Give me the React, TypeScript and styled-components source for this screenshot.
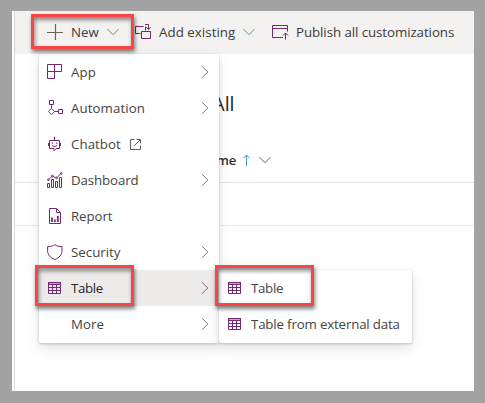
import React from "react";
import styled, { createGlobalStyle } from "styled-components";

const GlobalStyle = createGlobalStyle`
  * { box-sizing: border-box; }
  body {
    margin: 0;
    background: #a3a3a3;
    font-family: "Open Sans", "Noto Sans", sans-serif;
    font-size: 13.3px;
    color: #3b3a39;
    overflow: hidden;
  }
`;

const Frame = styled.main`
  position: relative;
  width: 485px;
  height: 403px;
  padding: 11px 11px 12px 12px;
  background: #a3a3a3;
`;

const Window = styled.div`
  display: flex;
  height: 380px;
  background: #fff;
`;

const Rail = styled.div`
  width: 3px;
  border-right: 1px solid #d8d8d8;
`;

const Page = styled.div`
  flex: 1;
  min-width: 0;
`;

const Toolbar = styled.header`
  display: flex;
  align-items: center;
  height: 43px;
  padding: 0 0 2px 32px;
  background: #f3f2f1;
`;

const Command = styled.div<{ $width: number; $gap?: number }>`
  display: flex;
  align-items: center;
  gap: ${(p) => p.$gap ?? 8}px;
  width: ${(p) => p.$width}px;
  flex: none;
  white-space: nowrap;
`;

const Label = styled.span<{ $spacing?: number }>`
  line-height: 20px;
  white-space: nowrap;
  letter-spacing: ${(p) => p.$spacing ?? 0}px;
`;

const Icon = styled.svg`
  display: block;
  flex: none;
  fill: none;
`;

const Title = styled.h1`
  display: flex;
  justify-content: flex-end;
  width: 219.5px;
  height: 28px;
  margin: 36px 0 0;
  font-size: 19.5px;
  font-weight: 400;
  line-height: 28px;
  color: #252423;
`;

const HeaderRow = styled.div`
  display: flex;
  align-items: center;
  height: 45px;
  margin-top: 20px;
  padding: 0 0 1px 184px;
  border-bottom: 1px solid #e6e5e4;
  color: #323130;
  font-weight: 600;
`;

const SortIcons = styled.div`
  display: flex;
  align-items: center;
  gap: 8px;
  margin-left: auto;
  margin-right: 203px;
`;

const ColumnName = styled.span`
  display: flex;
  justify-content: flex-end;
  width: 37.5px;
`;

const DataRow = styled.div`
  height: 43px;
  border-bottom: 1px solid #edebe9;
`;

const Menu = styled.nav<{ $x: number; $y: number; $width: number }>`
  position: absolute;
  left: ${(p) => p.$x}px;
  top: ${(p) => p.$y}px;
  width: ${(p) => p.$width}px;
  padding-bottom: 1px;
  background: #fff;
  border-radius: 2px;
  box-shadow: 0 6px 14px rgba(0, 0, 0, 0.11), 0 1px 3px rgba(0, 0, 0, 0.2);
`;

const MenuRow = styled.div<{ $active?: boolean }>`
  display: flex;
  align-items: center;
  height: 36px;
  padding: 0 10px 0 8px;
  gap: 8px;
  background: ${(p) => (p.$active ? "#edebe9" : "transparent")};
  color: ${(p) => (p.$active ? "#252423" : "#454443")};
`;

const IconSlot = styled.span`
  display: flex;
  width: 16px;
  height: 16px;
  flex: none;
`;

const Trailing = styled.span`
  display: flex;
  margin-left: auto;
`;

const Highlight = styled.div<{ $x: number; $y: number; $w: number; $h: number }>`
  position: absolute;
  left: ${(p) => p.$x}px;
  top: ${(p) => p.$y}px;
  width: ${(p) => p.$w}px;
  height: ${(p) => p.$h}px;
  border: 3px solid #fb4444;
  box-shadow: 1px 3px 4px rgba(0, 0, 0, 0.5), inset 1px 3px 4px rgba(0, 0, 0, 0.45);
`;

const PURPLE = "#742774";

const ChevronDown = ({ color = "#797775" }: { color?: string }) => (
  <Icon width="12" height="12" viewBox="0 0 12 12" stroke={color}>
    <path d="M.5 3.2 6 8.7l5.5-5.5" />
  </Icon>
);

const ChevronRight = ({ color = "#797775" }: { color?: string }) => (
  <Icon width="8" height="14" viewBox="0 0 8 14" stroke={color}>
    <path d="M1 1.2 6.8 7 1 12.8" />
  </Icon>
);

const PlusIcon = () => (
  <Icon width="16" height="16" viewBox="0 0 16 16" stroke="#6f625c" strokeWidth="1.2">
    <path d="M8.5 0v16M0 8.5h16" />
  </Icon>
);

const AddExistingIcon = () => (
  <Icon width="16" height="16" viewBox="0 0 16 16" stroke={PURPLE}>
    <path d="M5.5 9.5h-5v-7h8M10.5 2.5v4M6.5 7.5h9v7h-9zM10 .5h3.5v5M11.2 3.2l2.3 2.3 2.3-2.3" />
  </Icon>
);

const PublishIcon = () => (
  <Icon width="17" height="16" viewBox="0 0 17 16" stroke={PURPLE}>
    <path d="M11 13.5H.5V1.5h15v6M.5 4.5h15M13.5 15.5V9M11 11.5 13.5 9l2.5 2.5" />
  </Icon>
);

const AppIcon = () => (
  <Icon width="16" height="16" viewBox="0 0 16 16" stroke={PURPLE}>
    <path d="M.5.5h14v7H.5zM7.5.5v14h-7v-7" />
  </Icon>
);

const AutomationIcon = () => (
  <Icon width="16" height="16" viewBox="0 0 16 16" stroke={PURPLE}>
    <path d="M2.5.5h4v4h-4zM11.5 9.5h4v4h-4zM4.5 4.5v4M7.5 11.5h4M4.5 8.4l3.1 3.1-3.1 3.1-3.1-3.1z" />
  </Icon>
);

const ChatbotIcon = () => (
  <Icon width="16" height="16" viewBox="0 0 16 16" stroke={PURPLE}>
    <path d="M7.5 1v3.5M2.5 4.5h10v8H9L7 14.7v-2.2H2.5zM1.5 7v3M13.5 7v3M5 9.3c1.2 1.6 3.8 1.6 5 0" />
    <path d="M6.8.7h1.4v1.4H6.8zM4.7 6.5h1.2v1.2H4.7zM9.1 6.5h1.2v1.2H9.1z" fill={PURPLE} stroke="none" />
  </Icon>
);

const DashboardIcon = () => (
  <Icon width="16" height="16" viewBox="0 0 16 16" stroke={PURPLE}>
    <path d="M.5 11.5h2v4h-2zM4.5 7.5h2v8h-2zM8.5 9.5h2v6h-2zM12.5 5.5h2v10h-2z" />
    <path d="m1.5 7.8 3.4-3.3M6 4.3l3 1.5M10.2 5.2l3.5-3.4" />
    <circle cx="1.3" cy="7.8" r=".8" />
    <circle cx="5.4" cy="4" r=".9" />
    <circle cx="9.6" cy="5.9" r=".9" />
    <circle cx="14.2" cy="1.5" r=".9" />
  </Icon>
);

const ReportIcon = () => (
  <Icon width="16" height="16" viewBox="0 0 16 16" stroke={PURPLE}>
    <path d="M2.5.5h7l4 4v11h-11zM9.5.5v4h4" />
    <path d="M5 9.5V14M7.8 11.5V14M10.8 8v6" strokeWidth="1.8" />
  </Icon>
);

const ShieldIcon = () => (
  <Icon width="16" height="16" viewBox="0 0 16 16" stroke={PURPLE}>
    <path d="M7.8.6C6 2 3.7 2.6.6 2.6v4.2c0 4.1 2.8 7 7.2 8.7 4.4-1.7 7.2-4.6 7.2-8.7V2.6C12 2.6 9.6 2 7.8.6z" />
  </Icon>
);

const TableIcon = () => (
  <Icon width="16" height="16" viewBox="0 0 16 16" stroke={PURPLE}>
    <path d="M1.5 2.5h12v11h-12zM1.5 4.5h12M1.5 7.5h12M1.5 10.5h12M5.5 4.5v9M9.5 4.5v9" />
    <path d="M1 2h13v1.4H1z" fill={PURPLE} stroke="none" />
  </Icon>
);

const ExternalIcon = () => (
  <Icon width="12" height="11" viewBox="-1 0 12 11" stroke="#605e5c">
    <path d="M4.5.5h-4v10h10v-4M6.5.5h4v4M10.3.7 4.2 6.8" />
  </Icon>
);

const SortUpIcon = () => (
  <Icon width="8" height="12" viewBox="0 0 8 12" stroke="#4296d2">
    <path d="M3.5 12V1M.5 4l3-3 3 3" />
  </Icon>
);

interface Entry {
  label: string;
  icon?: React.ReactNode;
  spacing?: number;
  submenu?: boolean;
  external?: boolean;
  active?: boolean;
}

const entries: Entry[] = [
  { label: "App", icon: <AppIcon />, submenu: true, spacing: 0.1 },
  { label: "Automation", icon: <AutomationIcon />, submenu: true, spacing: 0.08 },
  { label: "Chatbot", icon: <ChatbotIcon />, external: true, spacing: 0.05 },
  { label: "Dashboard", icon: <DashboardIcon />, submenu: true, spacing: -0.12 },
  { label: "Report", icon: <ReportIcon />, spacing: -0.1 },
  { label: "Security", icon: <ShieldIcon />, submenu: true },
  { label: "Table", icon: <TableIcon />, submenu: true, active: true, spacing: -0.35 },
  { label: "More", submenu: true },
];

const subEntries: Entry[] = [
  { label: "Table", icon: <TableIcon />, spacing: -0.3 },
  { label: "Table from external data", icon: <TableIcon />, spacing: -0.17 },
];

const MenuItem = ({ entry }: { entry: Entry }) => (
  <MenuRow $active={entry.active}>
    <IconSlot>{entry.icon}</IconSlot>
    <Label $spacing={entry.spacing}>{entry.label}</Label>
    {entry.external && <ExternalIcon />}
    {entry.submenu && (
      <Trailing>
        <ChevronRight color={entry.active ? "#8b6464" : undefined} />
      </Trailing>
    )}
  </MenuRow>
);

export default function App() {
  return (
    <Frame>
      <GlobalStyle />
      <Window>
        <Rail />
        <Page>
          <Toolbar>
            <Command $width={88}>
              <PlusIcon />
              <Label>New</Label>
              <ChevronDown color="#8a7660" />
            </Command>
            <Command $width={137}>
              <AddExistingIcon />
              <Label $spacing={0.05}>Add existing</Label>
              <ChevronDown color="#5f8c9c" />
            </Command>
            <Command $width={190} $gap={7}>
              <PublishIcon />
              <Label $spacing={-0.07}>Publish all customizations</Label>
            </Command>
          </Toolbar>
          <Title>All</Title>
          <HeaderRow>
            <ColumnName>Name</ColumnName>
            <SortIcons>
              <SortUpIcon />
              <ChevronDown color="#605e5c" />
            </SortIcons>
          </HeaderRow>
          <DataRow />
        </Page>
      </Window>
      <Menu $x={39} $y={54} $width={180}>
        {entries.map((e) => (
          <MenuItem key={e.label} entry={e} />
        ))}
      </Menu>
      <Menu $x={219} $y={270} $width={193}>
        {subEntries.map((e) => (
          <MenuItem key={e.label} entry={e} />
        ))}
      </Menu>
      <Highlight $x={31} $y={14} $w={103} $h={35} />
      <Highlight $x={35} $y={265} $w={99} $h={41} />
      <Highlight $x={215} $y={265} $w={99} $h={41} />
    </Frame>
  );
}
